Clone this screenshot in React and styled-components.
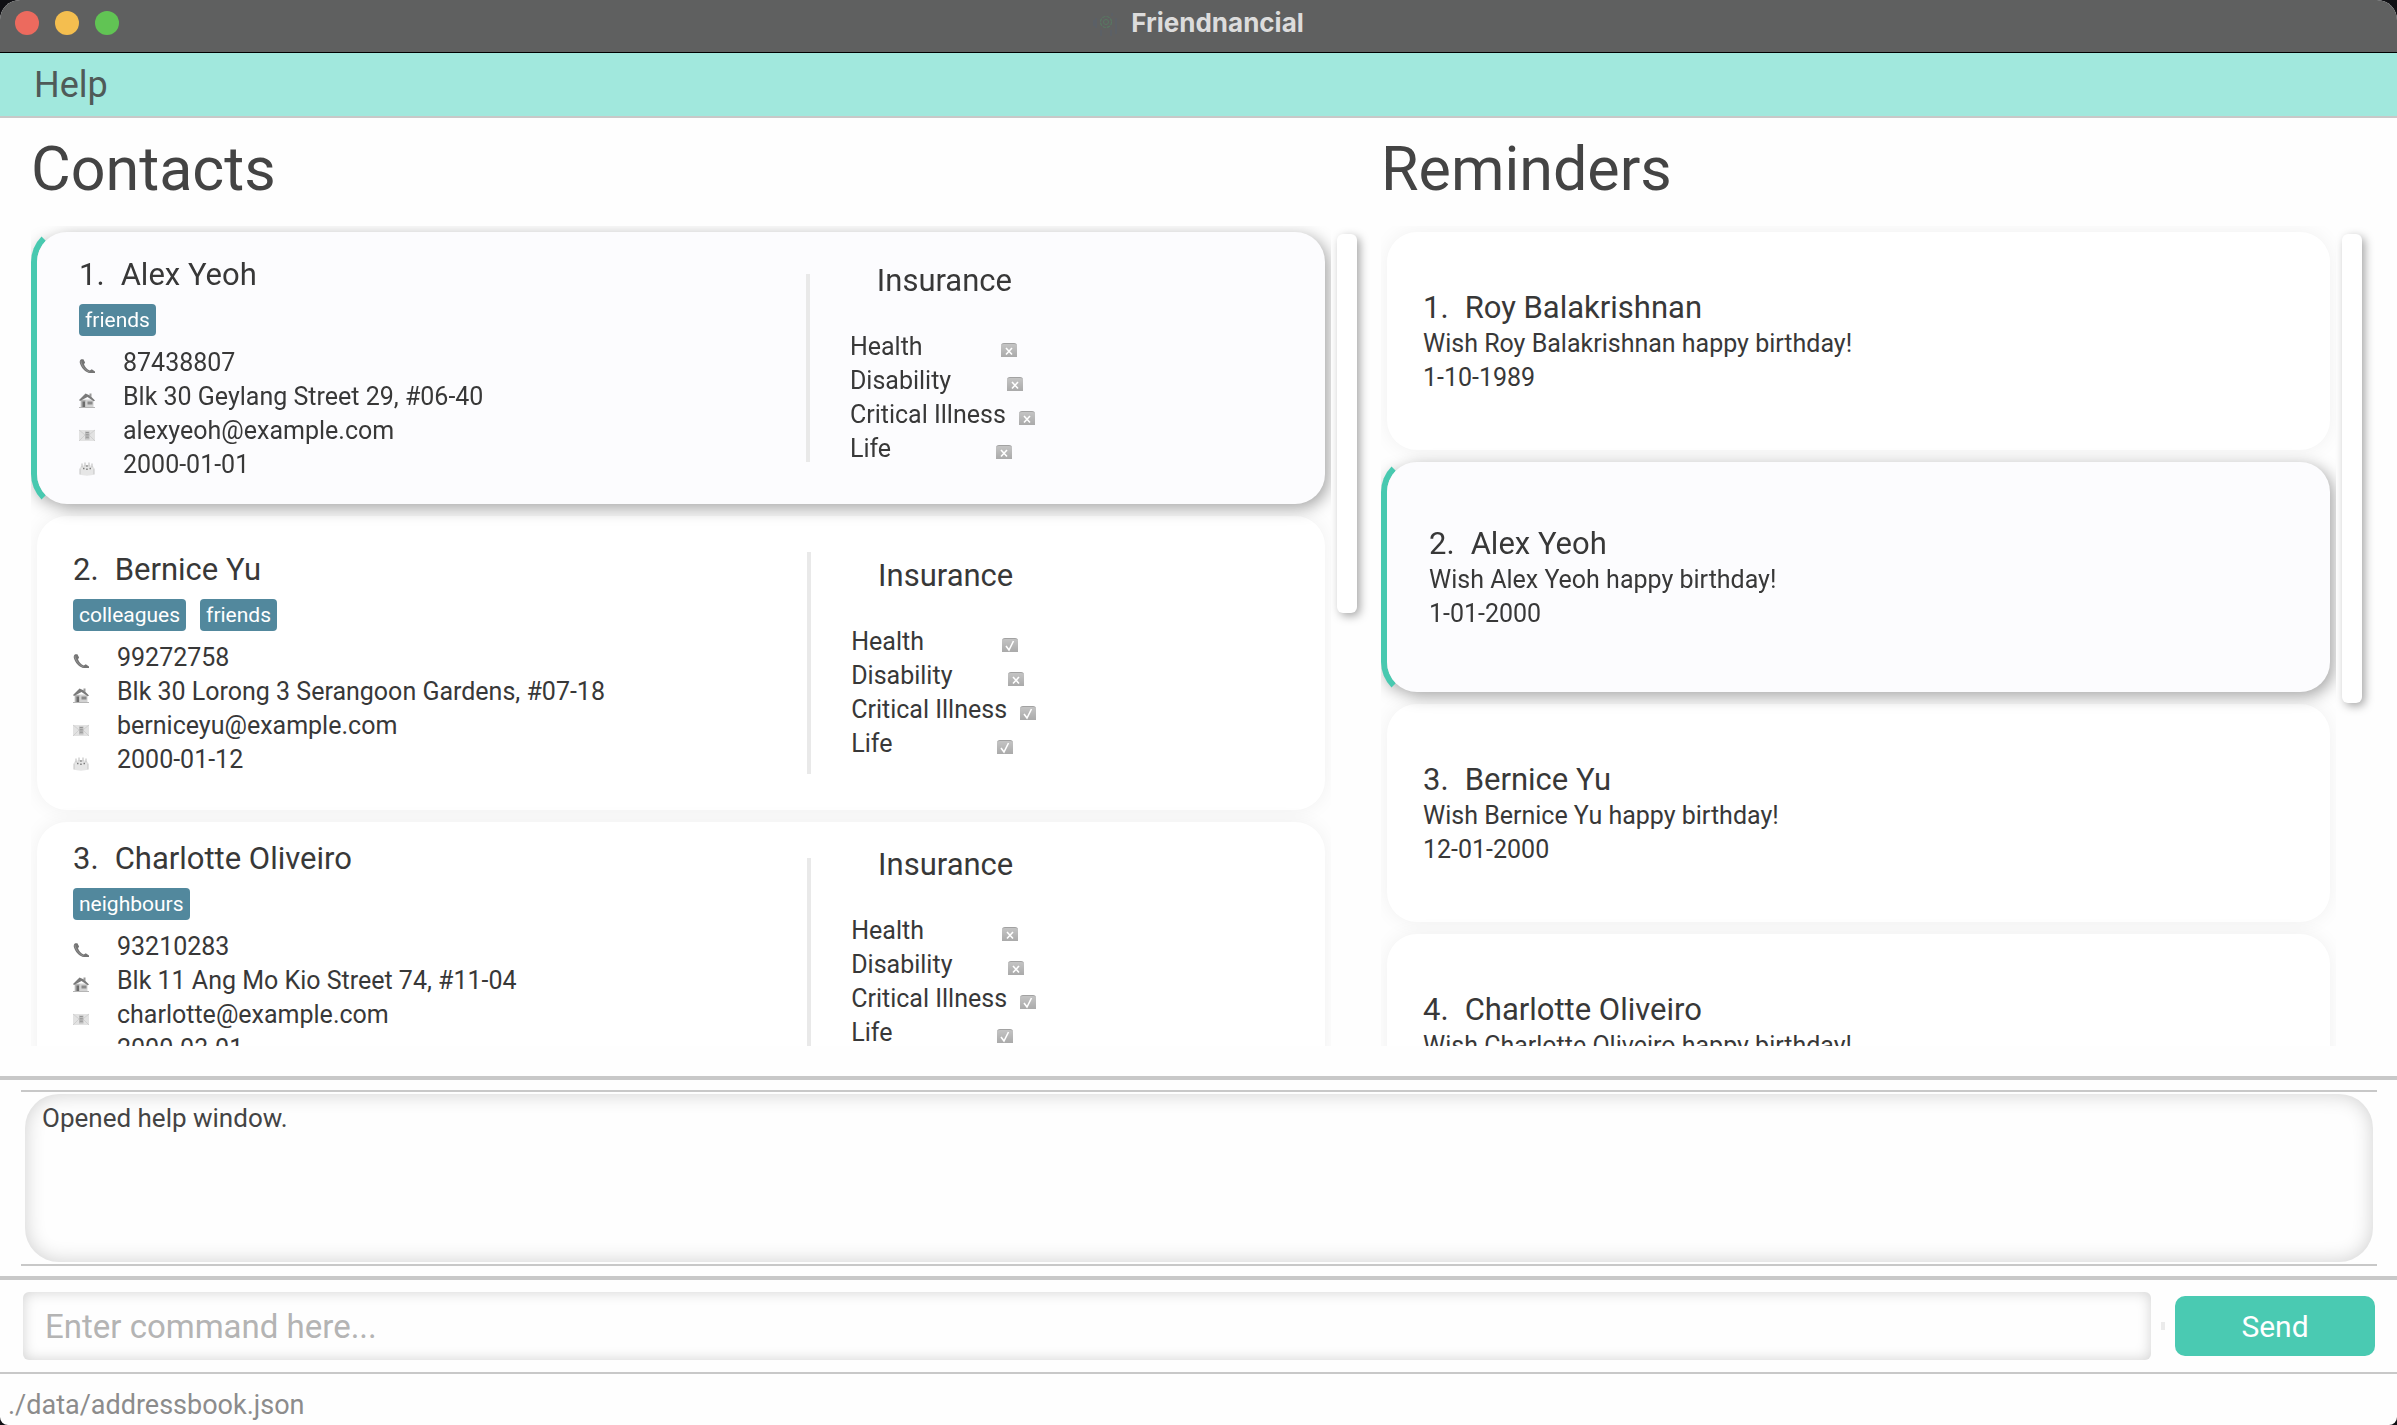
import React from "react";
import styled, { createGlobalStyle } from "styled-components";

const GlobalStyle = createGlobalStyle`
  * { box-sizing: border-box; }
  html, body { margin: 0; padding: 0; background: #101014; }
  body, button, input, textarea { font-family: Roboto, "Liberation Sans", sans-serif; }
  h1, h2, h3, p, ul, ol { margin: 0; padding: 0; font-weight: 400; }
  ul, ol { list-style: none; }
`;

const Window = styled.div`
  display: flex;
  flex-direction: column;
  height: 100vh;
  overflow: hidden;
  border-radius: 20px 20px 8px 8px;
  background: #fefefe;
  color: #383838;
`;

const TitleBar = styled.header`
  display: grid;
  grid-template-columns: 1fr auto 1fr;
  align-items: center;
  height: 53px;
  padding: 0 15px 6px;
  background: #5f6060;
  border-bottom: 1px solid #000;
  flex: none;
`;

const Lights = styled.div`
  display: flex;
  gap: 16px;
`;

const Light = styled.button`
  width: 24px;
  height: 24px;
  padding: 0;
  border: 0;
  border-radius: 50%;
  background: ${(p) => p.$color};
`;

const AppTitle = styled.h1`
  display: flex;
  align-items: center;
  gap: 12px;
  font-family: Inter, "Liberation Sans", sans-serif;
  font-size: 26px;
  line-height: 32px;
  font-weight: 700;
  color: #dcdcdc;
`;

const MenuBar = styled.nav`
  display: flex;
  height: 65px;
  padding: 0 26px;
  background: #a1e8dd;
  border-bottom: 2px solid #c8c8c8;
  flex: none;
`;

const MenuItem = styled.button`
  padding: 0 8px;
  border: 0;
  background: transparent;
  font-size: 36px;
  color: #4f5a58;
`;

const Panels = styled.main`
  display: grid;
  grid-template-columns: 1350fr 1016fr;
  flex: 1;
  min-height: 0;
  padding: 0 0 30px 31px;
`;

const Panel = styled.section`
  display: flex;
  flex-direction: column;
  min-height: 0;
`;

const PanelTitle = styled.h2`
  height: 108px;
  flex: none;
  font-size: 61px;
  line-height: 102px;
  color: #444;
`;

const PanelBody = styled.div`
  display: flex;
  flex: 1;
  min-height: 0;
`;

const List = styled.ol`
  flex: 1;
  min-width: 0;
  overflow: hidden;
`;

const Track = styled.div`
  width: ${(p) => p.$width}px;
  padding: 8px 0 0 6px;
`;

const Thumb = styled.div`
  width: 20px;
  height: ${(p) => p.$size}%;
  border-radius: 6px;
  background: #fff;
  box-shadow: 3px 3px 10px rgba(0, 0, 0, 0.35);
`;

const Cell = styled.li`
  display: flex;
  min-height: ${(p) => p.$height + (p.$selected ? 12 : 0)}px;
  border: 6px solid transparent;
  border-left-color: ${(p) => (p.$selected ? "#48c9b0" : "transparent")};
  border-radius: 36px;
  filter: ${(p) =>
    p.$selected ? "drop-shadow(4px 4px 8px rgba(0, 0, 0, 0.35))" : "none"};
`;

const Card = styled.article`
  flex: 1;
  display: grid;
  grid-template-columns: ${(p) => (p.$split ? "63fr 4px 41fr" : "1fr")};
  align-items: center;
  padding: 0 ${(p) => (p.$selected ? 42 : 36)}px;
  border-radius: 30px;
  background: ${(p) => (p.$selected ? "#fcfcfe" : "#fff")};
  box-shadow: ${(p) =>
    p.$selected ? "none" : "0 0 20px rgba(0, 0, 0, 0.06)"};
`;

const Details = styled.div`
  padding-top: 2px;
`;

const Name = styled.h3`
  display: flex;
  gap: 16px;
  font-size: 31px;
  line-height: 38px;
`;

const Tags = styled.ul`
  display: flex;
  gap: 14px;
  padding: 10px 0;
`;

const Tag = styled.li`
  padding: 0 6px;
  border-radius: 4px;
  background: #52889d;
  color: #fff;
  font-size: 21px;
  line-height: 32px;
`;

const Line = styled.p`
  display: flex;
  align-items: center;
  font-size: 25px;
  line-height: 34px;
  white-space: nowrap;
`;

const Glyph = styled.svg`
  width: 16px;
  height: 16px;
  margin: 6px 28px 0 0;
  flex: none;
`;

const Divider = styled.div`
  align-self: stretch;
  margin: ${(p) => (p.$selected ? 42 : 36)}px 0;
  background: #e9e9e9;
`;

const Insurance = styled.section`
  justify-self: start;
  padding: 0 0 8px 40px;
`;

const InsuranceTitle = styled.h3`
  padding: 0 0 30px 4px;
  font-size: 31px;
  line-height: 38px;
  text-align: center;
`;

const Policy = styled.label`
  display: flex;
  align-items: center;
  font-size: 25px;
  line-height: 34px;
  white-space: nowrap;
`;

const PolicyName = styled.span`
  width: ${(p) => p.$width}px;
`;

const Tick = styled.span`
  display: grid;
  width: 16px;
  height: 14px;
  margin-top: 6px;

  > * {
    grid-area: 1 / 1;
    width: 16px;
    height: 14px;
  }
`;

const TickInput = styled.input`
  appearance: none;
  margin: 0;
  border-radius: 3px 3px 0 0;
  border-top: 1px solid #a2a2a2;
  background: linear-gradient(#c4c4c4, #aaaaaa);
`;

const Output = styled.section`
  padding: 10px 20px 10px 21px;
  border-top: 4px solid #c8c8c8;
  border-bottom: 4px solid #c8c8c8;
  flex: none;
`;

const OutputFrame = styled.div`
  display: flex;
  padding: 2px 4px;
  border-top: 2px solid #c8c8c8;
  border-bottom: 2px solid #c8c8c8;
`;

const OutputText = styled.textarea`
  flex: 1;
  height: 168px;
  padding: 7px 17px;
  border: 0;
  border-radius: 34px;
  resize: none;
  outline: 0;
  background: #fefefe;
  box-shadow: inset 0 0 20px rgba(0, 0, 0, 0.19);
  font-size: 26px;
  line-height: 34px;
  color: #444;
`;

const CommandRow = styled.form`
  display: flex;
  align-items: center;
  gap: 10px;
  height: 94px;
  padding: 0 22px 0 23px;
  border-bottom: 2px solid #c8c8c8;
  flex: none;
`;

const CommandInput = styled.input`
  flex: 1;
  min-width: 0;
  height: 68px;
  padding: 0 22px;
  border: 0;
  border-radius: 6px;
  outline: 0;
  background: #fefefe;
  box-shadow: inset 0 0 14px rgba(0, 0, 0, 0.18);
  font-size: 33px;
  color: #383838;

  &::placeholder {
    color: #b4b4b4;
    opacity: 1;
  }
`;

const Notch = styled.span`
  width: 4px;
  height: 8px;
  background: #ebebeb;
`;

const SendButton = styled.button`
  width: 200px;
  height: 60px;
  border: 0;
  border-radius: 10px;
  background: #4acab2;
  color: #fff;
  font-size: 30px;
`;

const StatusBar = styled.footer`
  height: 51px;
  padding: 0 8px;
  flex: none;
  font-size: 27px;
  line-height: 62px;
  color: #8c8c8c;
`;

const Phone = () => (
  <Glyph viewBox="0 0 16 16" aria-hidden="true">
    <path
      d="M2.200 1.200C.8 2 .4 3.600 1 5.600c1.300 4.200 4.600 8 9 9.400h6v-1.600l-3.200-2.100-2 1.300C8 11.200 6 9 5 6.200l1.100-1.700L4.400 1.300z"
      fill="#747474"
    />
    <path d="M2 3.200c.2 4 4 8.800 8.600 10.800" fill="none" stroke="#9a9a9a" strokeWidth="0.8" />
  </Glyph>
);

const House = () => (
  <Glyph viewBox="0 0 16 16" aria-hidden="true">
    <path d="M1.500 7.500h13V15h-13z" fill="#d2d2d2" />
    <path d="M2 8h4.500v7H2z" fill="#b4b4b4" />
    <path d="M3.500 9.500h2.500v5.500H3.500z" fill="#6c6c6c" />
    <path d="M8.500 9.500h5v3h-5z" fill="#8a8a8a" />
    <path d="M0 8 6.500 1.500 11 3.500 16 8.500l-1.200.8L8.500 5 1 9z" fill="#7a7a7a" />
    <path d="M10.500 1.500h2v3.500l-2-1.500z" fill="#999" />
    <path d="M0 15h16v1H0z" fill="#b5b5b5" />
  </Glyph>
);

const Mail = () => (
  <Glyph viewBox="0 0 16 16" aria-hidden="true">
    <path d="M0 4h16v11H0z" fill="#e2e2e2" />
    <path d="M0 4 8 10.500 16 4M0 15l6-6M16 15l-6-6" fill="none" stroke="#cccccc" strokeWidth="0.8" />
    <path d="M6 5.500h4.500v8H6z" fill="#bdbdbd" />
    <path d="M6.800 6.500h3M6.800 8.800h3M6.800 11.200h3" stroke="#939393" />
  </Glyph>
);

const Cake = () => (
  <Glyph viewBox="0 0 16 16" aria-hidden="true">
    <path d="M1 8c0-2 3-3 7-3s7 1 7 3v6.500c-3 1.500-11 1.500-14 0z" fill="#e6e6e6" />
    <path d="M1 8.500v6M15 8.500v6" fill="none" stroke="#c4c4c4" />
    <path d="M3 3.500v4M6 2.500v4M10 2.500v4M13 3.500v4" stroke="#bababa" />
    <path d="M4 8.500h1.500M7.200 9.300h1.500M10.500 8.500H12M7.200 6h1.500" stroke="#7c7c7c" strokeWidth="1.500" />
  </Glyph>
);

const Logo = () => (
  <svg width="26" height="28" viewBox="0 0 26 28" aria-hidden="true">
    <g fill="none" strokeWidth="1">
      <circle cx="13" cy="13" r="5.500" stroke="#587862" strokeWidth="1.200" strokeDasharray="3.200 1.100" />
      <circle cx="13" cy="13" r="2.500" stroke="#587862" />
      <path d="M3 9v10M1 11v6M8 21v6M18 21v6M23 9v16M19 4v3" stroke="#58606c" />
    </g>
  </svg>
);

const policies = [
  { key: "health", label: "Health", width: 151 },
  { key: "disability", label: "Disability", width: 157 },
  { key: "critical", label: "Critical Illness", width: 169 },
  { key: "life", label: "Life", width: 146 },
];

const contacts = [
  {
    name: "Alex Yeoh",
    tags: ["friends"],
    phone: "87438807",
    address: "Blk 30 Geylang Street 29, #06-40",
    email: "alexyeoh@example.com",
    birthday: "2000-01-01",
    insured: [],
    height: 272,
    selected: true,
  },
  {
    name: "Bernice Yu",
    tags: ["colleagues", "friends"],
    phone: "99272758",
    address: "Blk 30 Lorong 3 Serangoon Gardens, #07-18",
    email: "berniceyu@example.com",
    birthday: "2000-01-12",
    insured: ["health", "critical", "life"],
    height: 306,
  },
  {
    name: "Charlotte Oliveiro",
    tags: ["neighbours"],
    phone: "93210283",
    address: "Blk 11 Ang Mo Kio Street 74, #11-04",
    email: "charlotte@example.com",
    birthday: "2000-03-01",
    insured: ["critical", "life"],
    height: 272,
  },
];

const reminders = [
  { name: "Roy Balakrishnan", date: "1-10-1989" },
  { name: "Alex Yeoh", date: "1-01-2000", selected: true },
  { name: "Bernice Yu", date: "12-01-2000" },
  { name: "Charlotte Oliveiro", date: "1-03-2000" },
];

function PolicyRow({ policy, checked }) {
  return (
    <Policy>
      <PolicyName $width={policy.width}>{policy.label}</PolicyName>
      <Tick>
        <TickInput type="checkbox" checked={checked} readOnly />
        <svg viewBox="0 0 16 14" aria-hidden="true">
          <path
            d={checked ? "M4 8 7 12l4.500-9" : "M5 5l6 6.500M11 5l-6 6.500"}
            fill="none"
            stroke="#fff"
            strokeWidth="1.600"
          />
        </svg>
      </Tick>
    </Policy>
  );
}

function Contact({ contact, index }) {
  const { selected, insured } = contact;
  return (
    <Cell $selected={selected} $height={contact.height}>
      <Card $selected={selected} $split>
        <Details>
          <Name>
            <span>{index}.</span>
            <span>{contact.name}</span>
          </Name>
          <Tags>
            {contact.tags.map((t) => (
              <Tag key={t}>{t}</Tag>
            ))}
          </Tags>
          <Line><Phone />{contact.phone}</Line>
          <Line><House />{contact.address}</Line>
          <Line><Mail />{contact.email}</Line>
          <Line><Cake />{contact.birthday}</Line>
        </Details>
        <Divider $selected={selected} />
        <Insurance>
          <InsuranceTitle>Insurance</InsuranceTitle>
          {policies.map((p) => (
            <PolicyRow key={p.key} policy={p} checked={insured.includes(p.key)} />
          ))}
        </Insurance>
      </Card>
    </Cell>
  );
}

function Reminder({ reminder, index }) {
  return (
    <Cell $selected={reminder.selected} $height={230}>
      <Card $selected={reminder.selected}>
        <Details>
          <Name>
            <span>{index}.</span>
            <span>{reminder.name}</span>
          </Name>
          <Line>Wish {reminder.name} happy birthday!</Line>
          <Line>{reminder.date}</Line>
        </Details>
      </Card>
    </Cell>
  );
}

export default function App() {
  return (
    <>
      <GlobalStyle />
      <Window>
        <TitleBar>
          <Lights>
            <Light type="button" aria-label="Close" $color="#ec6a5e" />
            <Light type="button" aria-label="Minimise" $color="#f4be4f" />
            <Light type="button" aria-label="Zoom" $color="#61c454" />
          </Lights>
          <AppTitle>
            <Logo />
            Friendnancial
          </AppTitle>
        </TitleBar>
        <MenuBar>
          <MenuItem type="button">Help</MenuItem>
        </MenuBar>
        <Panels>
          <Panel>
            <PanelTitle>Contacts</PanelTitle>
            <PanelBody>
              <List>
                {contacts.map((c, i) => (
                  <Contact key={c.name} contact={c} index={i + 1} />
                ))}
              </List>
              <Track $width={50}>
                <Thumb $size={46.7} />
              </Track>
            </PanelBody>
          </Panel>
          <Panel>
            <PanelTitle>Reminders</PanelTitle>
            <PanelBody>
              <List>
                {reminders.map((r, i) => (
                  <Reminder key={r.name} reminder={r} index={i + 1} />
                ))}
              </List>
              <Track $width={61}>
                <Thumb $size={57.8} />
              </Track>
            </PanelBody>
          </Panel>
        </Panels>
        <Output>
          <OutputFrame>
            <OutputText aria-label="Result" readOnly value="Opened help window." />
          </OutputFrame>
        </Output>
        <CommandRow onSubmit={(e) => e.preventDefault()}>
          <CommandInput aria-label="Command" placeholder="Enter command here..." />
          <Notch />
          <SendButton type="submit">Send</SendButton>
        </CommandRow>
        <StatusBar>./data/addressbook.json</StatusBar>
      </Window>
    </>
  );
}
